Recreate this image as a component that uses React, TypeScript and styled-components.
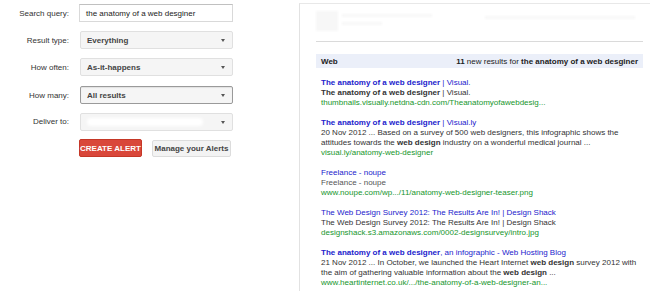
import React from 'react';
import styled, {createGlobalStyle} from 'styled-components';

const GlobalStyle = createGlobalStyle`
  html, body {
    margin: 0;
    padding: 0;
    background: #fff;
  }
  body {
    font-family: Arial, 'Liberation Sans', sans-serif;
    color: #333;
  }
`;

const Page = styled.div`
  display: flex;
  width: 650px;
  height: 291px;
  overflow: hidden;
`;

/* ---------- left: alert form ---------- */

const Form = styled.div`
  width: 299px;
  flex: none;
  display: grid;
  grid-template-columns: 69px 154px;
  grid-template-rows: 18px 18px 19px 18px 17px 18px;
  column-gap: 10px;
  row-gap: 9px;
  align-content: start;
  padding-top: 4px;
  box-sizing: border-box;
`;

const Label = styled.label`
  align-self: center;
  text-align: right;
  font-size: 8px;
  color: #333;
  white-space: nowrap;
`;

const TextInput = styled.div`
  box-sizing: border-box;
  height: 18px;
  border: 1px solid #d9d9d9;
  border-top-color: #c0c0c0;
  background: #fff;
  padding: 0 6px;
  display: flex;
  align-items: center;
  font-size: 8px;
  color: #222;
`;

const Select = styled.div<{$focused?: boolean}>`
  box-sizing: border-box;
  height: 18px;
  margin-left: 1px;
  border: 1px solid ${p => (p.$focused ? '#9a9a9a' : '#e0e0e0')};
  border-radius: 2px;
  background: #f5f5f5;
  box-shadow: ${p => (p.$focused ? 'inset 0 1px 1px rgba(0,0,0,0.08)' : 'none')};
  display: flex;
  align-items: center;
  padding: 0 7px 0 6px;
  font-size: 8px;
  font-weight: bold;
  color: #444;
`;

const SelectValue = styled.span`
  flex: 1;
  white-space: nowrap;
`;

const Arrow = styled.span`
  width: 0;
  height: 0;
  border-left: 2.5px solid transparent;
  border-right: 2.5px solid transparent;
  border-top: 3px solid #555;
`;

const Obscured = styled.span`
  flex: 1;
  height: 8px;
  margin-right: 18px;
  border-radius: 4px;
  background: #fff;
  filter: blur(1.5px);
`;

const Buttons = styled.div`
  grid-column: 2;
  display: flex;
  gap: 10px;
  align-items: flex-start;
`;

const Button = styled.button<{$primary?: boolean}>`
  box-sizing: border-box;
  height: ${p => (p.$primary ? '18px' : '17px')};
  margin-top: ${p => (p.$primary ? '0' : '1px')};
  padding: 0;
  width: ${p => (p.$primary ? '63px' : '79px')};
  border-radius: 2px;
  border: 1px solid ${p => (p.$primary ? '#c53727' : '#dcdcdc')};
  background: ${p => (p.$primary ? '#d9473a' : '#f3f3f3')};
  color: ${p => (p.$primary ? '#fff' : '#444')};
  font-family: Arial, 'Liberation Sans', sans-serif;
  font-size: 8px;
  font-weight: bold;
  white-space: nowrap;
  text-transform: ${p => (p.$primary ? 'uppercase' : 'none')};
`;

/* ---------- right: email preview ---------- */

const Preview = styled.div`
  flex: 1;
  margin-top: 3px;
  border-top: 1px solid #e8e8e8;
  border-left: 1px solid #e2e2e2;
  padding: 0 7px 0 16px;
`;

const MailHeader = styled.div`
  height: 37px;
  display: flex;
  align-items: flex-start;
  padding-top: 7px;
  box-sizing: border-box;
  gap: 4px;
`;

const Faint = styled.span<{$w: number; $h: number}>`
  display: block;
  width: ${p => p.$w}px;
  height: ${p => p.$h}px;
  background: #f7f7f7;
  filter: blur(1px);
`;

const FaintColumn = styled.div`
  display: flex;
  flex-direction: column;
  gap: 5px;
  padding-top: 3px;
`;

const HeaderRight = styled.div`
  margin-left: auto;
  padding-top: 5px;
  padding-right: 8px;
`;

const Rule = styled.hr`
  margin: 0;
  border: 0;
  border-top: 1px solid #dadada;
`;

const SectionBar = styled.div`
  margin-top: 12px;
  height: 14px;
  background: #ebeff9;
  display: flex;
  align-items: center;
  justify-content: space-between;
  padding: 0 5px;
  font-size: 8px;
  color: #222;
`;

const Results = styled.div`
  padding: 10px 0 0 5px;
`;

const Result = styled.div`
  margin-bottom: 10px;
  font-size: 8px;
  line-height: 10px;
  white-space: nowrap;
`;

const Title = styled.div`
  color: #2222cc;
`;

const Line = styled.div<{$muted?: boolean}>`
  color: ${p => (p.$muted ? '#555' : '#333')};
`;

const Url = styled.div`
  color: #16962c;
`;

type Seg = [string, boolean?];

const Segs = ({parts}: {parts: Seg[]}) => (
  <>
    {parts.map(([text, bold], i) => (bold ? <b key={i}>{text}</b> : <span key={i}>{text}</span>))}
  </>
);

interface ResultItem {
  title: Seg[];
  lines: Seg[][];
  url: string;
  muted?: boolean;
}

const results: ResultItem[] = [
  {
    title: [['The anatomy of a web designer', true], [' | Visual.']],
    lines: [[['The anatomy of a web designer', true], [' | Visual.']]],
    url: 'thumbnails.visually.netdna-cdn.com/Theanatomyofawebdesig...',
  },
  {
    title: [['The anatomy of a web designer', true], [' | Visual.ly']],
    lines: [
      [['20 Nov 2012 ... Based on a survey of 500 web designers, this infographic shows the']],
      [['attitudes towards the '], ['web design', true], [' industry on a wonderful medical journal ...']],
    ],
    url: 'visual.ly/anatomy-web-designer',
  },
  {
    title: [['Freelance - noupe']],
    lines: [[['Freelance - noupe']]],
    url: 'www.noupe.com/wp.../11/anatomy-web-designer-teaser.png',
    muted: true,
  },
  {
    title: [['The Web Design Survey 2012: The Results Are In! | Design Shack']],
    lines: [[['The Web Design Survey 2012: The Results Are In! | Design Shack']]],
    url: 'designshack.s3.amazonaws.com/0002-designsurvey/intro.jpg',
  },
  {
    title: [['The anatomy of a web designer', true], [', an infographic - Web Hosting Blog']],
    lines: [
      [['21 Nov 2012 ... In October, we launched the Heart Internet '], ['web design', true], [' survey 2012 with']],
      [['the aim of gathering valuable information about the '], ['web design', true], [' ...']],
    ],
    url: 'www.heartinternet.co.uk/.../the-anatomy-of-a-web-designer-an...',
  },
];

export default function App() {
  return (
    <Page>
      <GlobalStyle />
      <Form>
        <Label>Search query:</Label>
        <TextInput>the anatomy of a web desginer</TextInput>

        <Label>Result type:</Label>
        <Select>
          <SelectValue>Everything</SelectValue>
          <Arrow />
        </Select>

        <Label>How often:</Label>
        <Select>
          <SelectValue>As-it-happens</SelectValue>
          <Arrow />
        </Select>

        <Label>How many:</Label>
        <Select $focused>
          <SelectValue>All results</SelectValue>
          <Arrow />
        </Select>

        <Label>Deliver to:</Label>
        <Select>
          <Obscured />
          <Arrow />
        </Select>

        <Buttons>
          <Button $primary>Create alert</Button>
          <Button>Manage your Alerts</Button>
        </Buttons>
      </Form>

      <Preview>
        <MailHeader>
          <Faint $w={22} $h={20} />
          <FaintColumn>
            <Faint $w={90} $h={3} />
            <Faint $w={40} $h={3} />
          </FaintColumn>
          <HeaderRight>
            <Faint $w={150} $h={3} />
          </HeaderRight>
        </MailHeader>
        <Rule />
        <SectionBar>
          <b>Web</b>
          <span>
            <b>11</b> new results for <b>the anatomy of a web desginer</b>
          </span>
        </SectionBar>
        <Results>
          {results.map((r, i) => (
            <Result key={i}>
              <Title>
                <Segs parts={r.title} />
              </Title>
              {r.lines.map((l, j) => (
                <Line key={j} $muted={r.muted}>
                  <Segs parts={l} />
                </Line>
              ))}
              <Url>{r.url}</Url>
            </Result>
          ))}
        </Results>
      </Preview>
    </Page>
  );
}
